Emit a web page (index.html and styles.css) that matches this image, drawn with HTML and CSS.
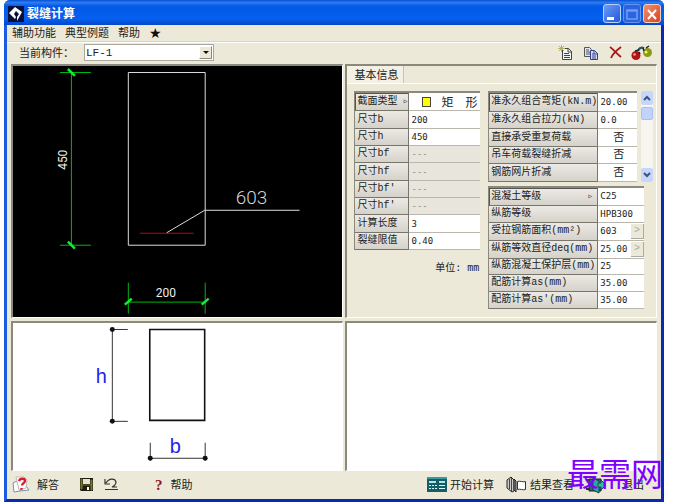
FILE: index.html
```
<!DOCTYPE html>
<html lang="zh-CN">
<head>
<meta charset="utf-8">
<title>裂缝计算</title>
<link rel="stylesheet" href="styles.css">
</head>
<body>
<main class="window">
  <header class="titlebar">
    <svg class="app-icon" width="16" height="16" viewBox="0 0 16 16" aria-hidden="true"><rect width="16" height="16" fill="#08103c"/><path d="M7 1l7 5-5 9v-4l2-3-3-3-2 3 2 3-1 2-6-6z" fill="#fff"/></svg>
    <h1 class="title">裂缝计算</h1>
    <div class="window-buttons">
      <button class="win-btn" aria-label="最小化"><svg width="18" height="18" viewBox="0 0 18 18"><path d="M4 12h7v3H4z" fill="#fff"/></svg></button>
      <button class="win-btn dim" aria-label="最大化"><svg width="18" height="18" viewBox="0 0 18 18"><path d="M4 5h10v9H4zM4 6h10" fill="none" stroke="#6f9cf5" stroke-width="1.6"/></svg></button>
      <button class="win-btn close" aria-label="关闭"><svg width="18" height="18" viewBox="0 0 18 18"><path d="M5 5l8 9M13 5l-8 9" stroke="#fff" stroke-width="2"/></svg></button>
    </div>
  </header>

  <nav class="menubar">
    <button>辅助功能</button><button>典型例题</button><button>帮助</button><button class="star" aria-label="收藏">★</button>
  </nav>

  <div class="toolbar">
    <label for="member">当前构件：</label>
    <div class="combo">
      <select id="member"><option>LF-1</option></select>
      <span class="combo-arrow"></span>
    </div>
    <div class="tools">
      <button aria-label="新建"><svg width="16" height="16" viewBox="0 0 16 16"><path d="M4.500 3.500h6l3 3v8h-9z" fill="#f4f4f4" stroke="#444"/><path d="M10 3v4h4M6 8.500h5M6 10.500h6M6 12.500h6" fill="none" stroke="#444"/><path d="M1 1l5 5M6 1L1 6M0 3.500h7M3.500 0v7" stroke="#b9b45c"/></svg></button>
      <button aria-label="复制"><svg width="16" height="16" viewBox="0 0 16 16"><path d="M1.500 2.500h5l2 2v7h-7z" fill="#dfe2f2" stroke="#555"/><path d="M3 5h3M3 7h4M3 9h4" stroke="#555"/><path d="M7.500 5.500h4l3 3v6h-7z" fill="#d4dcff" stroke="#34417f"/><path d="M11 6v3h4M9 9h2M9 11h4M9 13h4" fill="none" stroke="#34417f"/></svg></button>
      <button aria-label="删除"><svg width="14" height="16" viewBox="0 0 14 16"><path d="M2 2c3 2 7 7 11 10M13 2C9 5 5 8 3 13" fill="none" stroke="#a81818" stroke-width="1.800"/></svg></button>
      <button aria-label="比较"><svg width="22" height="16" viewBox="0 0 22 16"><path d="M7 6c1-3 3-4 6-3" fill="none" stroke="#245a6c" stroke-width="2"/><circle cx="5" cy="10.500" r="4.500" fill="#b01414"/><circle cx="3.500" cy="9.500" r="1.300" fill="#f4a0a0"/><circle cx="16.500" cy="7.500" r="4.500" fill="#8b9a10"/><circle cx="15" cy="7" r="1.500" fill="#f2f080"/><path d="M4 6l4-1M15 3l3-2M8 7l1 2M12 3l1 3" stroke="#222" stroke-width="1.500"/></svg></button>
    </div>
  </div>

  <div class="workspace">
    <section class="pane drawing" aria-label="截面图">
      <svg viewBox="0 0 330 250" preserveAspectRatio="xMinYMin meet">
        <path d="M115.500 6.500h77v173h-77z" fill="none" stroke="#ddd"/>
        <path d="M58.500 6v174M47 6.500h31M47 179.500h31M115.500 217v31M192.500 217v31M115 236.500h78" fill="none" stroke="#00b810"/>
        <path d="M55 3l7 7M55 176l7 7M112 239l7-6M189 239l7-6" stroke="#10f030" stroke-width="2.500"/>
        <path d="M127 167.500h54" stroke="#b01010"/>
        <path d="M154 167l38-22.500h95" fill="none" stroke="#ddd"/>
        <text class="dim-large" x="223" y="138">603</text>
        <text class="dim-text" x="143" y="231">200</text>
        <text class="dim-text" transform="translate(54 104) rotate(-90)">450</text>
      </svg>
    </section>

    <section class="pane info">
      <div class="tabs"><button class="tab">基本信息</button></div>
      <div class="info-body">
        <div class="column">
          <table class="props size-table">
            <tr><th class="picked"><label for="kind">截面类型</label><span class="mark">▹</span></th><td><div class="shape"><i class="swatch"></i><input id="kind" value="矩　形"></div></td></tr>
            <tr><th><label for="b">尺寸b</label></th><td><input id="b" value="200"></td></tr>
            <tr><th><label for="h">尺寸h</label></th><td><input id="h" value="450"></td></tr>
            <tr><th><label for="bf">尺寸bf</label></th><td class="off"><input id="bf" value="---" disabled></td></tr>
            <tr><th><label for="hf">尺寸hf</label></th><td class="off"><input id="hf" value="---" disabled></td></tr>
            <tr><th><label for="bf2">尺寸bf′</label></th><td class="off"><input id="bf2" value="---" disabled></td></tr>
            <tr><th><label for="hf2">尺寸hf′</label></th><td class="off"><input id="hf2" value="---" disabled></td></tr>
            <tr><th><label for="len">计算长度</label></th><td><input id="len" value="3"></td></tr>
            <tr><th><label for="lim">裂缝限值</label></th><td><input id="lim" value="0.40"></td></tr>
          </table>
          <p class="unit">单位: mm</p>
        </div>
        <div class="column wide">
          <div class="scroll-area">
            <table class="props load-table">
              <tr><th class="picked"><label for="m">准永久组合弯矩(kN.m)</label></th><td><input id="m" value="20.00"></td></tr>
              <tr><th><label for="n">准永久组合拉力(kN)</label></th><td><input id="n" value="0.0"></td></tr>
              <tr><th><label for="rep">直接承受重复荷载</label></th><td><input class="mid" id="rep" value="否"></td></tr>
              <tr><th><label for="crane">吊车荷载裂缝折减</label></th><td><input class="mid" id="crane" value="否"></td></tr>
              <tr><th><label for="mesh">钢筋网片折减</label></th><td><input class="mid" id="mesh" value="否"></td></tr>
            </table>
            <div class="scrollbar">
              <button aria-label="向上"><svg width="8" height="6" viewBox="0 0 8 6"><path d="M1 5l3-3 3 3" fill="none" stroke="#3d5480" stroke-width="2"/></svg></button>
              <span class="thumb"></span>
              <button class="down" aria-label="向下"><svg width="8" height="6" viewBox="0 0 8 6"><path d="M1 1l3 3 3-3" fill="none" stroke="#3d5480" stroke-width="2"/></svg></button>
            </div>
          </div>
          <table class="props steel-table">
            <tr><th class="picked"><label for="conc">混凝土等级</label><span class="mark">▹</span></th><td><input id="conc" value="C25"></td></tr>
            <tr><th><label for="bar">纵筋等级</label></th><td><input id="bar" value="HPB300"></td></tr>
            <tr><th><label for="area">受拉钢筋面积(mm²)</label></th><td><div class="with-more"><input id="area" value="603"><button class="more" aria-label="更多">&gt;</button></div></td></tr>
            <tr><th><label for="deq">纵筋等效直径deq(mm)</label></th><td><div class="with-more"><input id="deq" value="25.00"><button class="more" aria-label="更多">&gt;</button></div></td></tr>
            <tr><th><label for="cover">纵筋混凝土保护层(mm)</label></th><td><input id="cover" value="25"></td></tr>
            <tr><th><label for="as">配筋计算as(mm)</label></th><td><input id="as" value="35.00"></td></tr>
            <tr><th><label for="as2">配筋计算as′(mm)</label></th><td><input id="as2" value="35.00"></td></tr>
          </table>
        </div>
      </div>
    </section>

    <section class="pane paper" aria-label="尺寸示意">
      <svg viewBox="0 0 330 147" preserveAspectRatio="xMinYMin meet">
        <path d="M137 6.500h55v91h-55z" fill="none" stroke="#111" stroke-width="1.600"/>
        <path d="M99.500 6v92M97 6.500h18M97 98.500h18M137.500 120v18M192.500 120v18M137 135.500h55" fill="none" stroke="#333"/>
        <g fill="#111"><circle cx="99.500" cy="6.500" r="2.500"/><circle cx="99.500" cy="98.500" r="2.500"/><circle cx="137.500" cy="135.500" r="2.500"/><circle cx="192.500" cy="135.500" r="2.500"/></g>
        <text class="var" x="83" y="60">h</text>
        <text class="var" x="157" y="130">b</text>
      </svg>
    </section>
    <section class="pane paper" aria-label="结果"></section>
  </div>

  <footer class="actions">
    <button class="answer"><svg width="18" height="18" viewBox="0 0 18 18"><path d="M1 7l4-2 3 10-6 1zM8 15l9-1-3-4" fill="#fff" stroke="#7a8fb0"/><path d="M4 1h8l3 3-1 8-7 2z" fill="#fff" stroke="#c9b8b8"/><path d="M7 5c1-3 6-3 6 0 0 2-3 2-3 4.500M9.500 12v1.800" fill="none" stroke="#d3202c" stroke-width="2.400"/></svg>解答</button>
    <button class="save" aria-label="保存"><svg width="13" height="13" viewBox="0 0 13 13"><path d="M0 0h13v13H1l-1-1z" fill="#1d1d10"/><path d="M3 1h7v5H3z" fill="#e4e2d2"/><path d="M1 1h1v10H1zM11 2h1v10h-1zM2 7h9" fill="#77772a" stroke="#77772a"/><path d="M7 9h2v3H7z" fill="#fff"/></svg></button>
    <button class="undo" aria-label="撤销"><svg width="15" height="13" viewBox="0 0 15 13"><path d="M2 5c3-5 9-5 10-1 0 3-2 4-4 5h5M1 11.500h13M1 1v5h5" fill="none" stroke="#333" stroke-width="1.200"/></svg></button>
    <button class="help"><span class="question">?</span>帮助</button>
    <span class="spacer"></span>
    <button><svg width="20" height="15" viewBox="0 0 20 15"><path d="M0 0h20v15H0z" fill="#155e68"/><path d="M0 0h20v2H0z" fill="#3a9aa2"/><path d="M2 4h7v2H2zM12 4h6v2h-6z" fill="#b5e6df"/><path d="M2 8h2v1H2zM5 8h2v1H5zM8 8h2v1H8zM2 11h2v1H2zM5 11h2v1H5zM8 11h2v1H8zM12 8h6v1h-6zM12 11h6v1h-6z" fill="#d5fff5"/></svg>开始计算</button>
    <button class="result"><svg width="21" height="17" viewBox="0 0 21 17"><path d="M1 4l4-3 3 3v11l-2 1-5-4z" fill="#ccc" stroke="#222"/><path d="M3.500 3v10M5.500 2v13" stroke="#444"/><path d="M8 3l2 2v11l-2-2z" fill="#888" stroke="#222"/><path d="M11.500 5.500c3-1 5 1 8 0v8c-3 1-5-1-8 0z" fill="#fff" stroke="#333"/></svg>结果查看</button>
    <button class="exit"><svg width="21" height="18" viewBox="0 0 21 18"><path d="M3 3h12v12H3z" fill="#37616a" stroke="#222"/><path d="M7 2l6 3v12l-6-3z" fill="#25a9a3" stroke="#143f42"/><path d="M12 7h3V4l5 5-5 5v-3h-3z" fill="#2dbab0" stroke="#164e50"/><path d="M1 4h3M0 13h4" stroke="#333" stroke-width="2"/></svg>退出</button>
  </footer>
  <div class="watermark">最需网</div>
</main>
</body>
</html>
```
FILE: styles.css
```
* { box-sizing: border-box; }

body {
  margin: 0;
  padding: 0 16px 2px 4px;
  background: #fff;
  color: #222;
  font: 11px/14px "Liberation Sans", "Noto Sans CJK SC", sans-serif;
}

button, input, select {
  margin: 0;
  padding: 0;
  border: 0;
  background: none;
  color: inherit;
  font: inherit;
}

svg { display: block; flex: none; }

.window {
  position: relative;
  display: flex;
  flex-direction: column;
  min-height: calc(100vh - 2px);
  border: solid #0a28b0;
  border-width: 0 3px 3px;
  border-left-color: #1c5ce0;
  border-radius: 6px 6px 0 0;
  background: #ece9d8;
}

.titlebar {
  display: flex;
  align-items: center;
  gap: 3px;
  height: 25px;
  margin: 0 -3px;
  padding: 2px 3px 0 4px;
  border-radius: 6px 6px 0 0;
  background: linear-gradient(#0a50d0, #2a7cf5 10%, #0458e4 25%, #0560f0 75%, #0448c8);
}

.title {
  flex: 1;
  margin: 0;
  color: #fff;
  font-size: 12px;
  font-weight: 700;
}

.window-buttons { display: flex; gap: 2px; }

.win-btn {
  width: 18px;
  height: 19px;
  border: 1px solid #b8d0fa;
  border-radius: 3px;
  background: linear-gradient(135deg, #6c9cf6, #2257dd);
}
.win-btn svg { margin: -1px; }
.win-btn.dim { border-color: #6593ef; background: #2b62dd; }
.win-btn.close { border-color: #f2d0c4; background: linear-gradient(135deg, #f09070, #d8441c); }

.menubar {
  display: flex;
  align-items: center;
  gap: 9px;
  height: 17px;
  padding-left: 5px;
  border-bottom: 1px solid #d8d4c2;
}
.menubar .star { font-family: "DejaVu Sans", sans-serif; font-size: 14px; color: #111; }

.toolbar {
  display: flex;
  align-items: center;
  height: 22px;
  padding: 0 8px 2px 12px;
  border-top: 1px solid #fff;
}
.toolbar label { width: 65px; }

.combo {
  position: relative;
  width: 130px;
  height: 17px;
  border: 1px solid #aaa898;
  background: #fff;
}
.combo select {
  width: 100%;
  height: 15px;
  padding-left: 1px;
  appearance: none;
  font: 11px/14px "Liberation Mono", monospace;
}
.combo-arrow {
  position: absolute;
  top: 1px;
  right: 1px;
  width: 13px;
  height: 13px;
  border: 1px solid #8c8a7c;
  border-top-color: #fff;
  border-left-color: #fff;
  background: #ece9d8;
  pointer-events: none;
}
.combo-arrow::after {
  content: "";
  position: absolute;
  top: 4px;
  left: 3px;
  border: 3px solid transparent;
  border-top-color: #111;
  border-bottom: 0;
}

.tools { display: flex; align-items: center; gap: 9px; margin-left: auto; }

.workspace {
  flex: 1;
  display: grid;
  grid-template: 254px minmax(0, 1fr) / minmax(0, 333fr) minmax(0, 312fr);
  gap: 3px 2px;
  padding: 0 4px;
}

.pane {
  min-width: 0;
  border: 1px solid #fff;
  border-top: 2px solid #8b897b;
  border-left: 2px solid #8b897b;
}
.pane > svg { width: 100%; height: 100%; }
.drawing { background: #000; }
.paper { background: #fff; }

.dim-large { fill: #d4d4d4; font: 300 19px "Roboto", sans-serif; }
.dim-text { fill: #eee; font: 12px "Roboto", sans-serif; }
.var { fill: #2222ee; font: 20px "Liberation Sans", sans-serif; }

.tabs { display: flex; border-bottom: 1px solid #fff; }
.tab {
  height: 17px;
  padding: 0 5px 0 7px;
  border-right: 1px solid #c8c5b4;
  background: #f3f1e6;
}

.info-body { display: flex; gap: 8px; padding: 7px 12px 0 7px; }
.column { flex: 127 1 0; min-width: 0; }
.wide { flex: 157 1 0; }

.props {
  width: 100%;
  border-spacing: 0;
  border-top: 2px solid #8b897b;
  border-left: 1px solid #8b897b;
  table-layout: fixed;
  font: 10px/14px "Liberation Mono", "Noto Sans CJK SC", monospace;
}
.size-table { height: 159px; }
.load-table { height: 91px; }
.steel-table { height: 123px; margin-top: 4px; }

.props th {
  width: 109px;
  padding: 0 0 0 2px;
  border-right: 1px solid #77756c;
  border-bottom: 1px solid #77756c;
  background: linear-gradient(#eceae4, #d5d2ca);
  font-weight: 400;
  text-align: left;
  white-space: nowrap;
}
.size-table th { width: 54px; }
.props th.picked { border-top: 1px solid #555; border-left: 1px solid #555; padding-left: 1px; }
.size-table .picked .mark { margin: 0; }
.mark { float: right; margin-right: 4px; color: #555; }

.props td {
  padding: 0 0 0 2px;
  border-bottom: 1px solid #b9b7ae;
  background: #fff;
}
.props td.off { background: #e8e5dc; color: #888; }
.props input {
  display: block;
  width: 100%;
  height: 14px;
  font: 9px/14px "DejaVu Sans Mono", "Noto Sans CJK SC", monospace;
}
.props input.mid { font-size: 11px; text-align: center; }

.shape { display: flex; align-items: center; gap: 10px; padding-left: 11px; }
.props .shape input { font: 12px/14px "Noto Sans CJK SC", sans-serif; }
.swatch { flex: none; width: 9px; height: 10px; border: 1px solid #444; background: #ff0; }

.with-more { display: flex; }
.more {
  flex: none;
  width: 13px;
  height: 15px;
  border-right: 1px solid #aaa;
  border-bottom: 1px solid #aaa;
  background: #ece9d8;
  color: #aaa;
}

.unit { margin: 11px 1px 0; text-align: right; font-family: "DejaVu Sans Mono", "Noto Sans CJK SC", monospace; font-size: 10px; }

.scroll-area { display: flex; gap: 4px; margin-right: -9px; }
.scroll-area .props { flex: 1; width: auto; min-width: 0; }
.scrollbar { display: flex; flex-direction: column; width: 12px; background: #f6f5f0; }
.scrollbar button {
  display: grid;
  place-items: center;
  height: 14px;
  border-radius: 2px;
  background: #c6d6fc;
}
.thumb { height: 13px; margin-top: 2px; border: 1px solid #a9c0f5; border-radius: 2px; background: #c1d3fb; }
.scrollbar .down { margin-top: auto; }

.actions { display: flex; align-items: center; height: 28px; padding: 0 17px 0 5px; }
.actions button { display: flex; align-items: center; gap: 3px; white-space: nowrap; }
.actions .answer { gap: 7px; }
.actions .save { margin-left: 21px; }
.actions .undo { margin-left: 11px; }
.actions .help { margin-left: 36px; gap: 8px; }
.actions .result { margin-left: 12px; }
.actions .exit { margin-left: 12px; gap: 15px; }
.question { color: #8c1414; font: 700 15px/16px "Liberation Serif", serif; }
.spacer { flex: 1; }

.watermark {
  position: absolute;
  right: -2px;
  bottom: 9px;
  color: #8000ff;
  font: 32px/36px "Noto Sans CJK SC", sans-serif;
  pointer-events: none;
}
```
